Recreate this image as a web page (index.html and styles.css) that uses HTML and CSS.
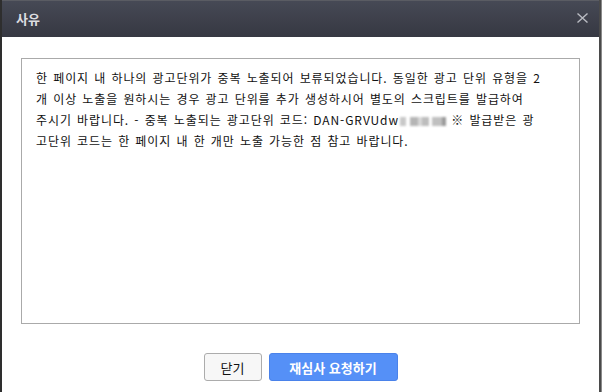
FILE: index.html
```html
<!DOCTYPE html>
<html lang="ko">
<head>
    <meta charset="utf-8">
    <title>사유</title>
    <link rel="stylesheet" href="styles.css">
</head>
<body>
    <div class="dialog">
        <div class="dialogHead">
            <span class="title">사유</span>
            <button class="close" aria-label="닫기">
                <svg width="11" height="10" viewBox="0 0 11 10">
                    <path d="M0.5 0.5 L10.5 9.5 M10.5 0.5 L0.5 9.5" stroke="#b9bbc2" stroke-width="1.4" fill="none"/>
                </svg>
            </button>
        </div>

        <div class="dialogBody">
            <div class="reason">
                <p>
                    한 페이지 내 하나의 광고단위가 중복 노출되어 보류되었습니다. 동일한 광고 단위 유형을 2<br>
                    개 이상 노출을 원하시는 경우 광고 단위를 추가 생성하시어 별도의 스크립트를 발급하여<br>
                    주시기 바랍니다. - 중복 노출되는 광고단위 코드: DAN-GRVUdw<span class="masked"></span> ※ 발급받은 광<br>
                    고단위 코드는 한 페이지 내 한 개만 노출 가능한 점 참고 바랍니다.
                </p>
            </div>

            <div class="buttons">
                <button class="btn">닫기</button>
                <button class="btn primary">재심사 요청하기</button>
            </div>
        </div>
    </div>
</body>
</html>
```

FILE: styles.css
```css
* {
    margin: 0;
    padding: 0;
    box-sizing: border-box;
}

body {
    background: #8a8a8a;
    font-family: "Noto Sans CJK KR", "Noto Sans", sans-serif;
    width: 602px;
    height: 392px;
    overflow: hidden;
}

.dialog {
    width: 601px;
    height: 392px;
    background: #fff;
    border-left: 2px solid #2e2e2e;
    border-right: 2px solid #4a4a4a;
    display: flex;
    flex-direction: column;
}

.dialogHead {
    height: 37px;
    background: linear-gradient(#464955, #363842);
    border-top: 1px solid #5a5c63;
    display: flex;
    align-items: center;
    justify-content: space-between;
    padding: 0 11px 2px 14px;
}

.title {
    color: #dcdde0;
    font-size: 13px;
    font-weight: bold;
}

.close {
    background: none;
    border: none;
    display: flex;
    cursor: pointer;
}

.dialogBody {
    flex: 1;
    padding: 21px 19px 0 19px;
    display: flex;
    flex-direction: column;
}

.reason {
    height: 266px;
    border: 1px solid #aaaaaa;
    padding: 8px 10px 0 14px;
}

.reason p {
    font-size: 12px;
    line-height: 21px;
    color: #111;
    white-space: nowrap;
    word-spacing: 1px;
    letter-spacing: 0.9px;
}

/* blurred part of the ad unit code */
.masked {
    display: inline-block;
    width: 46px;
    height: 9px;
    margin-left: 1px;
    vertical-align: -1px;
    background:
        linear-gradient(90deg, #c8c8c8 0 14%, #fff 14% 22%, #b5b5b5 22% 40%, #d8d8d8 40% 48%,
            #bdbdbd 48% 62%, #fff 62% 70%, #c0c0c0 70% 92%, #9a9a9a 92% 100%);
    filter: blur(1px);
}

.buttons {
    display: flex;
    justify-content: center;
    gap: 7px;
    margin-top: 29px;
}

.btn {
    height: 28px;
    width: 58px;
    border: 1px solid #acacac;
    border-radius: 3px;
    background: #f7f7f7;
    font-family: "Noto Sans CJK KR", sans-serif;
    font-size: 13px;
    color: #111;
    cursor: pointer;
}

.btn.primary {
    width: 129px;
    background: #5590f7;
    border-color: #4a82ea;
    color: #fff;
    font-weight: bold;
}
```
